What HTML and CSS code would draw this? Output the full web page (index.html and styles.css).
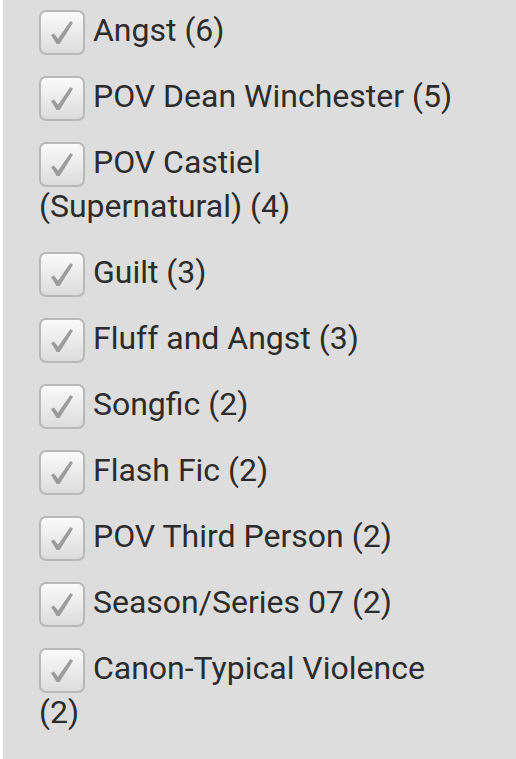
FILE: index.html
```html
<html>

<head>
	<link rel="stylesheet" href="styles.css">
</head>

<body>
	<div class="panel">
		<ul class="tagList">
			<li><label><span class="check"><svg viewBox="0 0 22 23"><polygon points="0,14 3,12.4 7,17.8 19.4,0 22,1.8 8.6,23 5.6,23" /></svg></span> Angst (6)</label></li>
			<li><label><span class="check"><svg viewBox="0 0 22 23"><polygon points="0,14 3,12.4 7,17.8 19.4,0 22,1.8 8.6,23 5.6,23" /></svg></span> POV Dean Winchester (5)</label></li>
			<li><label><span class="check"><svg viewBox="0 0 22 23"><polygon points="0,14 3,12.4 7,17.8 19.4,0 22,1.8 8.6,23 5.6,23" /></svg></span> POV Castiel (Supernatural) (4)</label></li>
			<li><label><span class="check"><svg viewBox="0 0 22 23"><polygon points="0,14 3,12.4 7,17.8 19.4,0 22,1.8 8.6,23 5.6,23" /></svg></span> Guilt (3)</label></li>
			<li><label><span class="check"><svg viewBox="0 0 22 23"><polygon points="0,14 3,12.4 7,17.8 19.4,0 22,1.8 8.6,23 5.6,23" /></svg></span> Fluff and Angst (3)</label></li>
			<li><label><span class="check"><svg viewBox="0 0 22 23"><polygon points="0,14 3,12.4 7,17.8 19.4,0 22,1.8 8.6,23 5.6,23" /></svg></span> Songfic (2)</label></li>
			<li><label><span class="check"><svg viewBox="0 0 22 23"><polygon points="0,14 3,12.4 7,17.8 19.4,0 22,1.8 8.6,23 5.6,23" /></svg></span> Flash Fic (2)</label></li>
			<li><label><span class="check"><svg viewBox="0 0 22 23"><polygon points="0,14 3,12.4 7,17.8 19.4,0 22,1.8 8.6,23 5.6,23" /></svg></span> POV Third Person (2)</label></li>
			<li><label><span class="check"><svg viewBox="0 0 22 23"><polygon points="0,14 3,12.4 7,17.8 19.4,0 22,1.8 8.6,23 5.6,23" /></svg></span> Season/Series 07 (2)</label></li>
			<li><label><span class="check"><svg viewBox="0 0 22 23"><polygon points="0,14 3,12.4 7,17.8 19.4,0 22,1.8 8.6,23 5.6,23" /></svg></span> Canon-Typical Violence (2)</label></li>
		</ul>
	</div>
</body>

</html>
```

FILE: styles.css
```css
html,
body {
	height: 100%;
}

body {
	margin: 0;
	overflow: hidden;
	background-color: white;
}

.panel {
	min-height: 100%;
	margin-left: 3px;
	padding: 8px 60px 0 36px;
	box-sizing: border-box;

	background-color: #dddddd;

	font-family: Roboto, "Liberation Sans", sans-serif;
	font-size: 32px;
	line-height: 44px;
	color: #2c2c2c;
}

.tagList {
	margin: 0;
	padding: 0;
	list-style: none;
}

.tagList li {
	margin-bottom: 22px;
}

.check {
	display: inline-flex;
	align-items: center;
	justify-content: center;
	width: 46px;
	height: 45px;
	margin: -3px 0;
	box-sizing: border-box;

	border: solid 2px #b8b8b8;
	border-radius: 7px;
	background: linear-gradient(#fafafa, #dcdcdc);

	vertical-align: middle;
}

.check svg {
	width: 22px;
	height: 23px;
	fill: #9c9c9c;
}
```
